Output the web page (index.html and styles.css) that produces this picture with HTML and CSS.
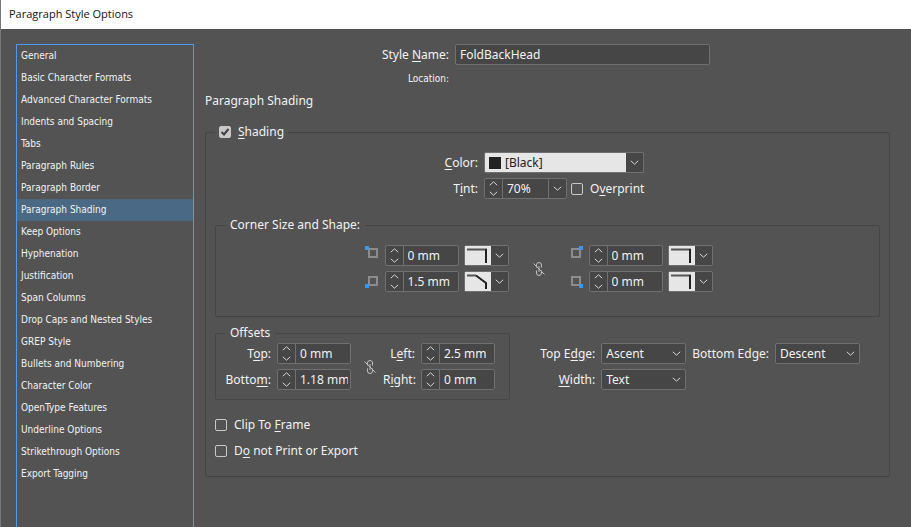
FILE: index.html
```html
<!doctype html>
<html lang="en">
  <head>
    <meta charset="UTF-8" />
    <meta name="viewport" content="width=device-width, initial-scale=1.0" />
    <title>Paragraph Style Options</title>
    <link rel="stylesheet" href="styles.css">
  </head>
  <body>
    <!-- shared icons -->
    <svg class="defs" width="0" height="0" aria-hidden="true">
      <symbol id="up" viewBox="0 0 9 5"><path d="M.8 4.2 4.5.8 8.2 4.2" /></symbol>
      <symbol id="down" viewBox="0 0 9 5"><path d="M.8.8 4.5 4.2 8.2.8" /></symbol>
      <symbol id="unlinked" viewBox="0 0 14 16">
        <path d="M4.5 6.5V4Q4.5 1.500 7 1.500T9.500 4V6.500M4.500 9.500V12Q4.500 14.500 7 14.500T9.500 12V9.500M7 5V11M1.500 2.500 12.500 13.500" />
      </symbol>
      <symbol id="square" viewBox="0 0 26 19">
        <path stroke="#555" d="M2 3.500H22" /><path stroke="#222" d="M21 3V17" />
      </symbol>
      <symbol id="bevel" viewBox="0 0 26 19">
        <path stroke="#555" d="M2 3.500H11" /><path stroke="#222" d="M11 3.500 21 11V17" />
      </symbol>
    </svg>

    <header class="titlebar">Paragraph Style Options</header>

    <div class="dialog">
      <nav class="sidebar">
        <a href="#">General</a>
        <a href="#">Basic Character Formats</a>
        <a href="#">Advanced Character Formats</a>
        <a href="#">Indents and Spacing</a>
        <a href="#">Tabs</a>
        <a href="#">Paragraph Rules</a>
        <a href="#">Paragraph Border</a>
        <a href="#" class="active">Paragraph Shading</a>
        <a href="#">Keep Options</a>
        <a href="#">Hyphenation</a>
        <a href="#">Justification</a>
        <a href="#">Span Columns</a>
        <a href="#">Drop Caps and Nested Styles</a>
        <a href="#">GREP Style</a>
        <a href="#">Bullets and Numbering</a>
        <a href="#">Character Color</a>
        <a href="#">OpenType Features</a>
        <a href="#">Underline Options</a>
        <a href="#">Strikethrough Options</a>
        <a href="#">Export Tagging</a>
      </nav>

      <main class="panel">
        <div class="name-row">
          <label for="styleName">Style <u>N</u>ame:</label>
          <input type="text" id="styleName" class="field" value="FoldBackHead" />
        </div>
        <div class="location">Location:</div>
        <h1>Paragraph Shading</h1>

        <fieldset class="shading">
          <legend>
            <label class="check"><input type="checkbox" checked /><span><u>S</u>hading</span></label>
          </legend>

          <div class="color-grid">
            <label for="color"><u>C</u>olor:</label>
            <div class="swatch-select">
              <span class="swatch"></span>
              <select id="color"><option>[Black]</option></select>
            </div>
            <label for="tint">T<u>i</u>nt:</label>
            <div class="tint-row">
              <div class="stepper tint">
                <div class="arrows">
                  <button aria-label="Increase tint"><svg><use href="#up" /></svg></button>
                  <button aria-label="Decrease tint"><svg><use href="#down" /></svg></button>
                </div>
                <input type="text" id="tint" value="70%" />
                <button class="drop" aria-label="Tint presets"><svg><use href="#down" /></svg></button>
              </div>
              <label class="check"><input type="checkbox" /><span>O<u>v</u>erprint</span></label>
            </div>
          </div>

          <fieldset class="corners">
            <legend>Corner Size and Shape:</legend>
            <div class="corner-layout">
              <div class="corner-rows">
                <div class="corner-row">
                  <svg class="corner" viewBox="0 0 14 14"><rect class="box" x="4" y="4" width="8" height="8" /><rect class="dot" x="0" y="1" width="4" height="4" /></svg>
                  <div class="stepper">
                    <div class="arrows">
                      <button aria-label="Increase top left"><svg><use href="#up" /></svg></button>
                      <button aria-label="Decrease top left"><svg><use href="#down" /></svg></button>
                    </div>
                    <input type="text" aria-label="Top left size" value="0 mm" />
                  </div>
                  <div class="shape">
                    <svg><use href="#square" /></svg>
                    <select aria-label="Top left shape"><option></option></select>
                  </div>
                </div>
                <div class="corner-row">
                  <svg class="corner" viewBox="0 0 14 14"><rect class="box" x="4" y="2" width="8" height="8" /><rect class="dot" x="0" y="9" width="4" height="4" /></svg>
                  <div class="stepper">
                    <div class="arrows">
                      <button aria-label="Increase bottom left"><svg><use href="#up" /></svg></button>
                      <button aria-label="Decrease bottom left"><svg><use href="#down" /></svg></button>
                    </div>
                    <input type="text" aria-label="Bottom left size" value="1.5 mm" />
                  </div>
                  <div class="shape">
                    <svg><use href="#bevel" /></svg>
                    <select aria-label="Bottom left shape"><option></option></select>
                  </div>
                </div>
              </div>

              <button class="link" aria-label="Make all corners the same"><svg><use href="#unlinked" /></svg></button>

              <div class="corner-rows">
                <div class="corner-row">
                  <svg class="corner" viewBox="0 0 14 14"><rect class="box" x="3" y="4" width="8" height="8" /><rect class="dot" x="10" y="1" width="4" height="4" /></svg>
                  <div class="stepper">
                    <div class="arrows">
                      <button aria-label="Increase top right"><svg><use href="#up" /></svg></button>
                      <button aria-label="Decrease top right"><svg><use href="#down" /></svg></button>
                    </div>
                    <input type="text" aria-label="Top right size" value="0 mm" />
                  </div>
                  <div class="shape">
                    <svg><use href="#square" /></svg>
                    <select aria-label="Top right shape"><option></option></select>
                  </div>
                </div>
                <div class="corner-row">
                  <svg class="corner" viewBox="0 0 14 14"><rect class="box" x="3" y="2" width="8" height="8" /><rect class="dot" x="10" y="9" width="4" height="4" /></svg>
                  <div class="stepper">
                    <div class="arrows">
                      <button aria-label="Increase bottom right"><svg><use href="#up" /></svg></button>
                      <button aria-label="Decrease bottom right"><svg><use href="#down" /></svg></button>
                    </div>
                    <input type="text" aria-label="Bottom right size" value="0 mm" />
                  </div>
                  <div class="shape">
                    <svg><use href="#square" /></svg>
                    <select aria-label="Bottom right shape"><option></option></select>
                  </div>
                </div>
              </div>
            </div>
          </fieldset>

          <div class="lower">
            <fieldset class="offsets">
              <legend>Offsets</legend>
              <div class="offset-grid">
                <label for="top">T<u>o</u>p:</label>
                <div class="stepper">
                  <div class="arrows">
                    <button aria-label="Increase top"><svg><use href="#up" /></svg></button>
                    <button aria-label="Decrease top"><svg><use href="#down" /></svg></button>
                  </div>
                  <input type="text" id="top" value="0 mm" />
                </div>
                <button class="link" aria-label="Make all offsets the same"><svg><use href="#unlinked" /></svg></button>
                <label for="left">L<u>e</u>ft:</label>
                <div class="stepper">
                  <div class="arrows">
                    <button aria-label="Increase left"><svg><use href="#up" /></svg></button>
                    <button aria-label="Decrease left"><svg><use href="#down" /></svg></button>
                  </div>
                  <input type="text" id="left" value="2.5 mm" />
                </div>
                <label for="bottom">Botto<u>m</u>:</label>
                <div class="stepper">
                  <div class="arrows">
                    <button aria-label="Increase bottom"><svg><use href="#up" /></svg></button>
                    <button aria-label="Decrease bottom"><svg><use href="#down" /></svg></button>
                  </div>
                  <input type="text" id="bottom" value="1.18 mm" />
                </div>
                <label for="right">R<u>i</u>ght:</label>
                <div class="stepper">
                  <div class="arrows">
                    <button aria-label="Increase right"><svg><use href="#up" /></svg></button>
                    <button aria-label="Decrease right"><svg><use href="#down" /></svg></button>
                  </div>
                  <input type="text" id="right" value="0 mm" />
                </div>
              </div>
            </fieldset>

            <div class="edge-grid">
              <label for="topEdge">Top E<u>dg</u>e:</label>
              <select id="topEdge" class="field"><option>Ascent</option></select>
              <label for="bottomEdge">Bottom Edge:</label>
              <select id="bottomEdge" class="field"><option>Descent</option></select>
              <label for="width"><u>W</u>idth:</label>
              <select id="width" class="field"><option>Text</option></select>
            </div>
          </div>

          <div class="checks">
            <label class="check"><input type="checkbox" /><span>Clip To <u>F</u>rame</span></label>
            <label class="check"><input type="checkbox" /><span>D<u>o</u> not Print or Export</span></label>
          </div>
        </fieldset>
      </main>
    </div>
  </body>
</html>
```

FILE: styles.css
```css
* {
  box-sizing: border-box;
}
body {
  margin: 0;
  height: 100vh;
  display: flex;
  flex-direction: column;
  overflow: hidden;
  background-color: #535353;
  border-left: 1px solid #777;
  color: #f2f2f2;
  font: 12px/16px 'Noto Sans', sans-serif;
}
.defs {
  position: absolute;
}
.titlebar {
  flex: none;
  height: 29px;
  padding: 0 8px;
  background-color: #fff;
  color: #111;
  font-family: 'Open Sans', sans-serif;
  font-size: 11px;
  line-height: 28px;
}
.dialog {
  flex: 1;
  min-height: 0;
  display: flex;
  gap: 11px;
  padding: 15px 21px 0 15px;
}

/* category list */
.sidebar {
  flex: none;
  width: 178px;
  border: 1px solid #4a9bf5;
  border-bottom: none;
  font-family: 'DejaVu Sans Condensed', 'DejaVu Sans', sans-serif;
  font-size: 10px;
  line-height: 22px;
}
.sidebar a {
  display: block;
  padding-left: 4px;
  color: inherit;
  text-decoration: none;
}
.sidebar a.active {
  background-color: #4a6984;
}

/* right side */
.panel {
  flex: 1;
  min-width: 0;
}
.name-row,
.color-grid {
  display: grid;
  align-items: center;
}
.name-row {
  grid-template-columns: 244px minmax(0, 255px);
  column-gap: 6px;
}
.name-row > label,
.color-grid > label,
.offset-grid > label,
.edge-grid > label {
  text-align: right;
  white-space: nowrap;
}
.location {
  width: 244px;
  margin-top: 7px;
  font-family: 'DejaVu Sans Condensed', 'DejaVu Sans', sans-serif;
  font-size: 10px;
  line-height: 14px;
  text-align: right;
}
h1 {
  margin: 7px 0 15px;
  font-size: 12px;
  font-weight: normal;
}
u {
  text-underline-offset: 2px;
}
fieldset {
  min-width: 0;
  margin: 0;
  padding: 0;
  border: 1px solid #464646;
  border-radius: 2px;
}
legend {
  margin-left: 9px;
  padding: 0 5px;
}
.shading {
  padding: 12px 9px;
}
.shading > legend {
  margin-left: 0;
  padding: 0 4px;
}

/* form controls */
button {
  display: flex;
  align-items: center;
  justify-content: center;
  margin: 0;
  padding: 0;
  border: none;
  background: none;
}
svg {
  display: block;
  fill: none;
  stroke: #d8d8d8;
}
input,
select {
  min-width: 0;
  margin: 0;
  color: inherit;
  font: inherit;
}
.field {
  height: 21px;
  padding: 0 4px;
  border: 1px solid #707070;
  border-radius: 2px;
  background-color: #464646;
}
select {
  appearance: none;
  background: #464646 url("data:image/svg+xml,%3Csvg xmlns='http://www.w3.org/2000/svg' width='9' height='5' fill='none' stroke='%23d8d8d8'%3E%3Cpath d='M.8.8 4.5 4.2 8.2.8'/%3E%3C/svg%3E") no-repeat right 4px center;
}
.stepper {
  display: flex;
  width: 74px;
  height: 21px;
  border: 1px solid #707070;
  border-radius: 2px;
  background-color: #464646;
}
.stepper input {
  flex: 1;
  padding: 0 2px 0 4px;
  border: none;
  border-left: 1px solid #707070;
  background: none;
}
.arrows {
  display: flex;
  flex-direction: column;
  justify-content: center;
  gap: 5px;
  width: 17px;
}
.arrows svg,
.drop svg {
  width: 9px;
  height: 5px;
}
.tint {
  width: 83px;
}
.drop {
  width: 18px;
  border-left: 1px solid #707070;
}
.check {
  display: flex;
  align-items: center;
  gap: 7px;
}
.check input {
  appearance: none;
  width: 12px;
  height: 12px;
  border: 1px solid #c8c8c8;
  border-radius: 2px;
}
.check input:checked {
  background: #c8c8c8 url("data:image/svg+xml,%3Csvg xmlns='http://www.w3.org/2000/svg' width='10' height='10' fill='none' stroke='%23404040' stroke-width='2'%3E%3Cpath d='M1.500 5 4 7.500 8.500 2'/%3E%3C/svg%3E") no-repeat center;
}

/* colour and tint */
.color-grid {
  grid-template-columns: 263px 1fr;
  gap: 5px 6px;
}
.swatch-select {
  display: flex;
  align-items: center;
  width: 160px;
  height: 21px;
  border: 1px solid #707070;
  border-radius: 2px;
  background-color: #e6e6e6;
}
.swatch {
  width: 12px;
  height: 12px;
  margin-left: 4px;
  background-color: #222;
}
.swatch-select select {
  flex: 1;
  height: 19px;
  padding: 0 20px 0 4px;
  border: none;
  background-color: #e6e6e6;
  background-image: url("data:image/svg+xml,%3Csvg xmlns='http://www.w3.org/2000/svg' width='17' height='19' fill='none' stroke='%23d8d8d8'%3E%3Crect width='17' height='19' fill='%23464646' stroke='none'/%3E%3Cpath d='M4.800 7.800 8.500 11.200 12.200 7.800'/%3E%3C/svg%3E");
  background-position: right center;
  color: #222;
}
.tint-row {
  display: flex;
  gap: 4px;
}

/* corner size and shape */
.corners {
  margin-top: 18px;
  padding: 12px 0 24px;
}
.corner-layout {
  display: flex;
  align-items: center;
  justify-content: center;
  gap: 23px;
  padding-right: 18px;
}
.corner-rows {
  display: grid;
  gap: 5px;
}
.corner-row {
  display: flex;
  gap: 5px;
}
.corner {
  width: 14px;
  height: 14px;
  margin-right: 1px;
}
.corner-row:last-child .corner {
  align-self: center;
}
.corner .box {
  stroke: #8c8c8c;
  stroke-width: 2;
}
.corner .dot {
  fill: #3b97f0;
  stroke: none;
}
.shape {
  display: flex;
  width: 45px;
  height: 21px;
  border: 1px solid #707070;
  border-radius: 2px;
}
.shape svg {
  width: 26px;
  height: 19px;
  background-color: #e6e6e6;
  stroke-width: 2;
}
.shape select {
  flex: 1;
  border: none;
}
.link svg {
  flex: none;
  width: 14px;
  height: 16px;
  stroke: #c0c0c0;
}

/* offsets and edges */
.lower {
  display: flex;
  justify-content: space-between;
  margin-top: 8px;
}
.offsets {
  width: 295px;
  padding: 2px 14px 9px 0;
}
.offset-grid {
  display: grid;
  grid-template-columns: 54px 74px 20px 32px 74px;
  gap: 5px 6px;
  align-items: center;
  justify-content: end;
}
.offset-grid .link {
  grid-row: 1 / 3;
  grid-column: 3;
  justify-content: flex-end;
}
.edge-grid {
  display: grid;
  grid-template-columns: auto 85px auto 85px;
  gap: 5px 6px;
  align-items: center;
  align-content: start;
  padding: 18px 20px 0 0;
}
.checks {
  margin-top: 12px;
}
.checks .check {
  height: 26px;
}
```
